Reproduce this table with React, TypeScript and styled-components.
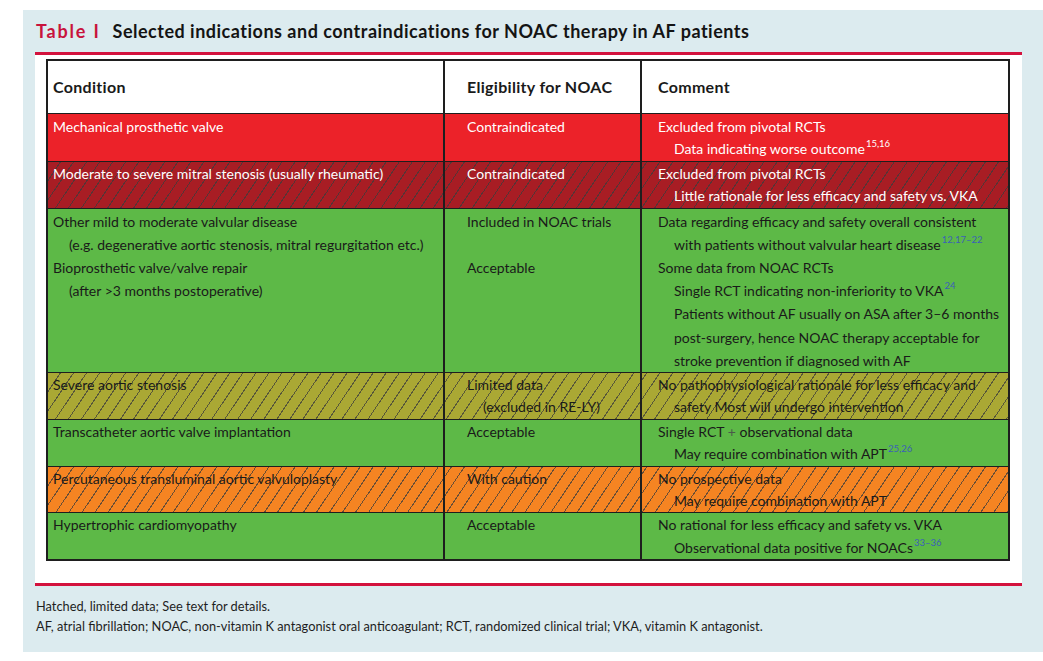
import React from "react";
import styled, { createGlobalStyle, css } from "styled-components";

const GlobalStyle = createGlobalStyle`
  html, body { margin: 0; padding: 0; background: #ffffff; }
  body { font-family: Lato, "Open Sans", "Liberation Sans", sans-serif; overflow: hidden; }
`;

type Tone = "red" | "darkred" | "green" | "olive" | "orange";

const toneColor: Record<Tone, string> = {
  red: "#ec2229",
  darkred: "#a81d24",
  green: "#5db947",
  olive: "#aaa834",
  orange: "#f58422",
};

const Page = styled.div`
  padding: 10px 0 0 23px;
`;

const Panel = styled.div`
  width: 1020px;
  height: 642px;
  background: #dcebef;
  padding-left: 12px;
  box-sizing: border-box;
`;

const TitleBar = styled.div`
  height: 42px;
  display: flex;
  align-items: center;
  gap: 12px;
  padding-left: 1px;
  font-size: 18px;
  font-weight: 700;
  color: #141414;
  letter-spacing: 0.5px;
`;

const TableLabel = styled.span`
  color: #c8133d;
  letter-spacing: 1.8px;
`;

const Sheet = styled.div`
  width: 987px;
  box-sizing: border-box;
  background: #ffffff;
  border-top: 3px solid #d3123d;
  border-bottom: 3px solid #d3123d;
  padding: 4px 12px 22px 11px;
`;

const Table = styled.div`
  width: 964px;
  box-sizing: border-box;
  border: 2px solid #1e1e1e;
`;

const Row = styled.div<{ $tone?: Tone; $hatched?: boolean; $header?: boolean; $tall?: boolean; $first?: boolean }>`
  display: grid;
  grid-template-columns: 395px 197px 1fr;
  background: ${(p) => (p.$tone ? toneColor[p.$tone] : "#ffffff")};
  color: ${(p) => (p.$tone === "red" || p.$tone === "darkred" ? "#ffffff" : "#1a1a1a")};
  border-top: ${(p) => (p.$first ? "none" : "1px solid #1e1e1e")};
  line-height: ${(p) => (p.$tall ? "23.2px" : "22.4px")};
  ${(p) =>
    p.$hatched &&
    css`
      background: repeating-linear-gradient(
          124deg,
          transparent 0 9.8px,
          rgba(60, 60, 60, 0.75) 9.8px 10.8px
        ),
        ${toneColor[p.$tone as Tone]};
    `}
  ${(p) =>
    p.$header &&
    css`
      border-top: none;
      border-bottom: 1px solid #1e1e1e;
      height: 52px;
    `}
`;

const Cell = styled.div<{ $col: number; $header?: boolean; $lead?: boolean }>`
  box-sizing: border-box;
  border-left: ${(p) => (p.$col === 0 ? "none" : "2px solid #1e1e1e")};
  padding: ${(p) => (p.$lead ? 2 : 1)}px 6px 0 ${(p) => (p.$col === 0 ? 5 : p.$col === 1 ? 22 : 16)}px;
  font-size: 14px;
  ${(p) =>
    p.$header &&
    css`
      display: flex;
      align-items: center;
      padding-top: 0;
      font-weight: 700;
      font-size: 16px;
      letter-spacing: 0.3px;
    `}
`;

const Line = styled.div<{ $indent?: boolean }>`
  padding-left: ${(p) => (p.$indent ? 16 : 0)}px;
  white-space: nowrap;
  min-height: 1lh;
`;

const Sup = styled.sup<{ $light?: boolean }>`
  font-size: 9.5px;
  line-height: 0;
  vertical-align: 7px;
  margin-left: 1px;
  color: ${(p) => (p.$light ? "#ffffff" : "#3b5fb8")};
`;

const Plus = styled.span`
  color: #4b5a4b;
`;

const Footer = styled.div`
  padding: 10px 0 0 1px;
  font-size: 12.8px;
  line-height: 20px;
  color: #1e1e1e;
`;

type LineData = { t: React.ReactNode; i?: boolean; s?: string };
type RowData = { tone: Tone; hatched?: boolean; tall?: boolean; cells: LineData[][] };

const rows: RowData[] = [
  {
    tone: "red",
    cells: [
      [{ t: "Mechanical prosthetic valve" }],
      [{ t: "Contraindicated" }],
      [{ t: "Excluded from pivotal RCTs" }, { t: "Data indicating worse outcome", i: true, s: "15,16" }],
    ],
  },
  {
    tone: "darkred",
    hatched: true,
    cells: [
      [{ t: "Moderate to severe mitral stenosis (usually rheumatic)" }],
      [{ t: "Contraindicated" }],
      [{ t: "Excluded from pivotal RCTs" }, { t: "Little rationale for less efficacy and safety vs. VKA", i: true }],
    ],
  },
  {
    tone: "green",
    tall: true,
    cells: [
      [
        { t: "Other mild to moderate valvular disease" },
        { t: "(e.g. degenerative aortic stenosis, mitral regurgitation etc.)", i: true },
        { t: "Bioprosthetic valve/valve repair" },
        { t: "(after >3 months postoperative)", i: true },
      ],
      [{ t: "Included in NOAC trials" }, { t: "" }, { t: "Acceptable" }],
      [
        { t: "Data regarding efficacy and safety overall consistent" },
        { t: "with patients without valvular heart disease", i: true, s: "12,17–22" },
        { t: "Some data from NOAC RCTs" },
        { t: "Single RCT indicating non-inferiority to VKA", i: true, s: "24" },
        { t: "Patients without AF usually on ASA after 3–6 months", i: true },
        { t: "post-surgery, hence NOAC therapy acceptable for", i: true },
        { t: "stroke prevention if diagnosed with AF", i: true },
      ],
    ],
  },
  {
    tone: "olive",
    hatched: true,
    cells: [
      [{ t: "Severe aortic stenosis" }],
      [{ t: "Limited data" }, { t: "(excluded in RE-LY)", i: true }],
      [
        { t: "No pathophysiological rationale for less efficacy and" },
        { t: "safety Most will undergo intervention", i: true },
      ],
    ],
  },
  {
    tone: "green",
    cells: [
      [{ t: "Transcatheter aortic valve implantation" }],
      [{ t: "Acceptable" }],
      [
        {
          t: (
            <>
              Single RCT <Plus>+</Plus> observational data
            </>
          ),
        },
        { t: "May require combination with APT", i: true, s: "25,26" },
      ],
    ],
  },
  {
    tone: "orange",
    hatched: true,
    cells: [
      [{ t: "Percutaneous transluminal aortic valvuloplasty" }],
      [{ t: "With caution" }],
      [{ t: "No prospective data" }, { t: "May require combination with APT", i: true }],
    ],
  },
  {
    tone: "green",
    cells: [
      [{ t: "Hypertrophic cardiomyopathy" }],
      [{ t: "Acceptable" }],
      [
        { t: "No rational for less efficacy and safety vs. VKA" },
        { t: "Observational data positive for NOACs", i: true, s: "33–36" },
      ],
    ],
  },
];

export default function App() {
  return (
    <>
      <GlobalStyle />
      <Page>
        <Panel>
          <TitleBar>
            <TableLabel>Table I</TableLabel>
            <span>Selected indications and contraindications for NOAC therapy in AF patients</span>
          </TitleBar>
          <Sheet>
            <Table>
              <Row $header>
                <Cell $col={0} $header>Condition</Cell>
                <Cell $col={1} $header>Eligibility for NOAC</Cell>
                <Cell $col={2} $header>Comment</Cell>
              </Row>
              {rows.map((r, ri) => (
                <Row key={ri} $tone={r.tone} $hatched={r.hatched} $tall={r.tall} $first={ri === 0}>
                  {r.cells.map((lines, ci) => (
                    <Cell key={ci} $col={ci} $lead={ri === 0}>
                      {lines.map((l, li) => (
                        <Line key={li} $indent={l.i}>
                          {l.t}
                          {l.s && <Sup $light={r.tone === "red" || r.tone === "darkred"}>{l.s}</Sup>}
                        </Line>
                      ))}
                    </Cell>
                  ))}
                </Row>
              ))}
            </Table>
          </Sheet>
          <Footer>
            <div>Hatched, limited data; See text for details.</div>
            <div>
              AF, atrial fibrillation; NOAC, non-vitamin K antagonist oral anticoagulant; RCT, randomized clinical
              trial; VKA, vitamin K antagonist.
            </div>
          </Footer>
        </Panel>
      </Page>
    </>
  );
}
